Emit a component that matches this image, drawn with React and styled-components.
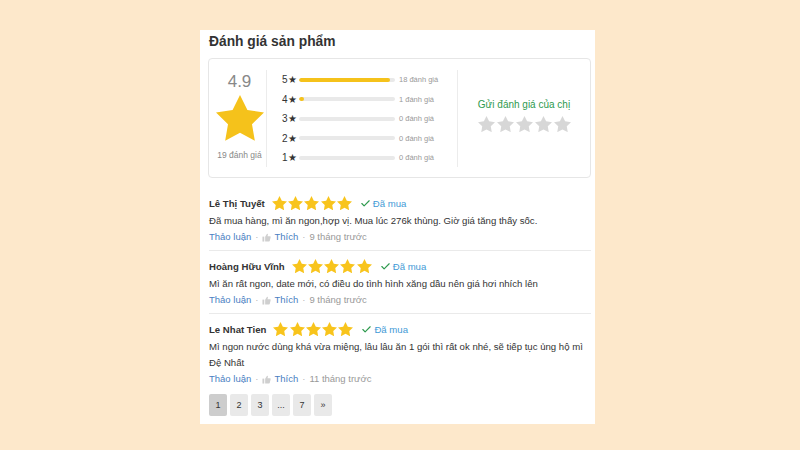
import React from "react";
import styled, { createGlobalStyle } from "styled-components";
import { Check } from "lucide-react";

const GlobalStyle = createGlobalStyle`
  html, body { margin: 0; padding: 0; }
  body {
    background: #fde8cb;
    font-family: "Liberation Sans", Arial, sans-serif;
    color: #333;
    width: 800px;
    height: 450px;
    overflow: hidden;
  }
`;

const STAR = "M12 2l3.09 6.26L22 9.27l-5 4.87 1.18 6.88L12 17.77l-6.18 3.25L7 14.14 2 9.27l6.91-1.01L12 2z";

const Star = ({ size, color }) => (
  <svg width={size} height={size * 0.95} viewBox="2 2 20 19" style={{ display: "block", flex: "none" }}>
    <path d={STAR} fill={color} />
  </svg>
);

const Page = styled.div`
  padding: 30px 0 0 200px;
`;

const Card = styled.div`
  width: 395px;
  height: 394px;
  box-sizing: border-box;
  background: #fff;
  padding: 2px 4px 0 8px;
`;

const Title = styled.h2`
  margin: 0 0 6px 1px;
  font-size: 13.8px;
  line-height: 20px;
  font-weight: 700;
  color: #333;
`;

const SummaryBox = styled.div`
  display: flex;
  border: 1px solid #e6e6e6;
  border-radius: 4px;
  padding: 11px 0 10px;
  height: 120px;
  box-sizing: border-box;
`;

const Overall = styled.div`
  width: 58px;
  border-right: 1px solid #ececec;
  display: flex;
  flex-direction: column;
  align-items: center;
  padding-left: 4px;
  box-sizing: border-box;
`;

const Score = styled.div`
  font-size: 17px;
  line-height: 20px;
  color: #888;
  margin-top: 2px;
`;

const BigStarWrap = styled.div`
  margin-top: 3px;
`;

const SmallGray = styled.div`
  font-size: 8.5px;
  line-height: 12px;
  color: #888;
  margin-top: 8px;
`;

const Bars = styled.div`
  width: 191px;
  border-right: 1px solid #ececec;
  padding-left: 15px;
  box-sizing: border-box;
`;

const BarRow = styled.div`
  display: flex;
  align-items: center;
  height: 19.5px;
`;

const BarLabel = styled.span`
  width: 17px;
  font-size: 10px;
  color: #333;
  white-space: nowrap;
`;

const Track = styled.div`
  width: 96px;
  height: 4px;
  border-radius: 2px;
  background: #e9e9e9;
  overflow: hidden;
`;

const Fill = styled.div`
  height: 100%;
  background: #f5c21b;
  border-radius: 2px;
`;

const Count = styled.span`
  margin-left: 4px;
  font-size: 7.5px;
  color: #999;
  white-space: nowrap;
`;

const SendCol = styled.div`
  flex: 1;
  display: flex;
  flex-direction: column;
  align-items: center;
  padding-top: 28px;
`;

const SendText = styled.div`
  font-size: 10px;
  line-height: 14px;
  color: #2e9a4e;
`;

const StarRow = styled.div`
  display: flex;
  gap: ${(p) => p.$gap}px;
  margin-top: ${(p) => p.$mt || 0}px;
`;

const ReviewList = styled.div`
  margin-top: 10px;
  padding-left: 1px;
`;

const Review = styled.div`
  padding: 6px 0 5px;
  border-bottom: ${(p) => (p.$last ? "none" : "1px solid #eaeaea")};
`;

const NameRow = styled.div`
  display: flex;
  align-items: center;
  height: 18px;
  margin-bottom: 1px;
`;

const Name = styled.span`
  font-size: 9.6px;
  font-weight: 700;
  color: #333;
  margin-right: 7px;
`;

const Bought = styled.span`
  display: flex;
  align-items: center;
  margin-left: 8px;
  font-size: 9.6px;
  color: #3f9ad6;
  gap: 2px;
`;

const Comment = styled.p`
  margin: 0;
  font-size: 9.6px;
  line-height: 16px;
  color: #333;
`;

const Meta = styled.div`
  display: flex;
  align-items: center;
  font-size: 9.5px;
  line-height: 16px;
  color: #999;
`;

const Link = styled.span`
  color: #4a80c2;
`;

const Dot = styled.span`
  color: #b5b5b5;
  margin: 0 4px;
`;

const Pager = styled.div`
  display: flex;
  gap: 3px;
  margin-top: 2px;
  padding-left: 1px;
`;

const PageBtn = styled.div`
  min-width: 18px;
  height: 22px;
  padding: 0 ${(p) => (p.$wide ? 5 : 0)}px;
  box-sizing: border-box;
  display: flex;
  align-items: center;
  justify-content: center;
  font-size: 9px;
  color: #333;
  border-radius: 2px;
  background: ${(p) => (p.$active ? "#cdcdcd" : "#e9e9e9")};
`;

const Thumb = () => (
  <svg width="9" height="9" viewBox="0 0 10 10" style={{ display: "block", marginRight: 3 }}>
    <rect x="0.5" y="4" width="2" height="5.5" fill="#cfcfcf" />
    <path d="M3.5 4.2 L5.6 0.8 Q6.6 0.6 6.6 1.8 L6.1 3.6 L9 3.6 Q9.8 3.8 9.6 4.7 L8.6 9 Q8.4 9.5 7.8 9.5 L3.5 9.5 Z" fill="#cfcfcf" />
  </svg>
);

const bars = [
  { n: 5, count: 18 },
  { n: 4, count: 1 },
  { n: 3, count: 0 },
  { n: 2, count: 0 },
  { n: 1, count: 0 },
];

const reviews = [
  {
    name: "Lê Thị Tuyết",
    text: "Đã mua hàng, mì ăn ngon,hợp vị. Mua lúc 276k thùng. Giờ giá tăng thấy sốc.",
    time: "9 tháng trước",
  },
  {
    name: "Hoàng Hữu Vĩnh",
    text: "Mì ăn rất ngon, date mới, có điều do tình hình xăng dầu nên giá hơi nhích lên",
    time: "9 tháng trước",
  },
  {
    name: "Le Nhat Tien",
    text: "Mì ngon nước dùng khá vừa miệng, lâu lâu ăn 1 gói thì rất ok nhé, sẽ tiếp tục ủng hộ mì Đệ Nhất",
    time: "11 tháng trước",
  },
];

export default function App() {
  return (
    <>
      <GlobalStyle />
      <Page>
        <Card>
          <Title>Đánh giá sản phẩm</Title>
          <SummaryBox>
            <Overall>
              <Score>4.9</Score>
              <BigStarWrap>
                <Star size={48} color="#f5c21b" />
              </BigStarWrap>
              <SmallGray>19 đánh giá</SmallGray>
            </Overall>
            <Bars>
              {bars.map((b) => (
                <BarRow key={b.n}>
                  <BarLabel>{b.n}★</BarLabel>
                  <Track>
                    <Fill style={{ width: `${(b.count / 19) * 100}%` }} />
                  </Track>
                  <Count>{b.count} đánh giá</Count>
                </BarRow>
              ))}
            </Bars>
            <SendCol>
              <SendText>Gửi đánh giá của chị</SendText>
              <StarRow $gap={2} $mt={4}>
                {[0, 1, 2, 3, 4].map((i) => (
                  <Star key={i} size={17} color="#d7d7d7" />
                ))}
              </StarRow>
            </SendCol>
          </SummaryBox>
          <ReviewList>
            {reviews.map((r, idx) => (
              <Review key={r.name} $last={idx === reviews.length - 1}>
                <NameRow>
                  <Name>{r.name}</Name>
                  <StarRow $gap={1.25}>
                    {[0, 1, 2, 3, 4].map((i) => (
                      <Star key={i} size={15} color="#f8c41c" />
                    ))}
                  </StarRow>
                  <Bought>
                    <Check size={11} color="#2e9a4e" strokeWidth={2.5} />
                    Đã mua
                  </Bought>
                </NameRow>
                <Comment>{r.text}</Comment>
                <Meta>
                  <Link>Thảo luận</Link>
                  <Dot>·</Dot>
                  <Thumb />
                  <Link>Thích</Link>
                  <Dot>·</Dot>
                  <span>{r.time}</span>
                </Meta>
              </Review>
            ))}
          </ReviewList>
          <Pager>
            <PageBtn $active>1</PageBtn>
            <PageBtn>2</PageBtn>
            <PageBtn>3</PageBtn>
            <PageBtn $wide>...</PageBtn>
            <PageBtn>7</PageBtn>
            <PageBtn>»</PageBtn>
          </Pager>
        </Card>
      </Page>
    </>
  );
}
